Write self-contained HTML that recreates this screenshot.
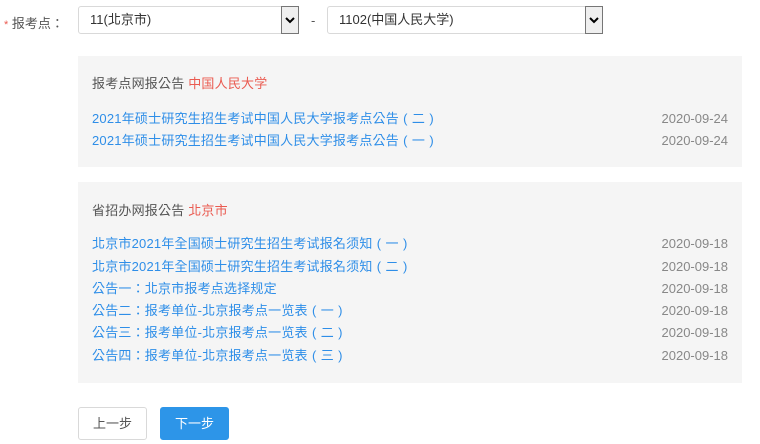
<!DOCTYPE html>
<html><head><meta charset="utf-8"><style>
body{margin:0;width:760px;height:444px;background:#fff;font-family:"Liberation Sans","Noto Sans CJK TC",sans-serif;font-size:13px;color:#555;position:relative;overflow:hidden}
.a{position:absolute;white-space:nowrap}
.sel{position:absolute;top:6px;height:28px;border:1px solid #d9d9d9;border-radius:3px;box-sizing:border-box;background:#fff;color:#333;line-height:26px;padding-left:11px;font-size:13px}
.arr{position:absolute;right:-1px;top:-1px;width:18px;height:28px;border:1px solid #767676;background:#efefef;box-sizing:border-box}
.panel{position:absolute;left:78px;width:664px;background:#f5f5f5;letter-spacing:0.2px}
.t{position:absolute;left:14px;color:#555}
.r{color:#ea5a50}
.li{position:absolute;left:14px;right:14px;height:22px;line-height:22px}
.li span{color:#2e8ee8}
.li b{float:right;font-weight:normal;color:#888;letter-spacing:0}
.p{display:inline-block;width:13px;text-align:center}
.btn{position:absolute;top:407px;width:69px;height:33px;border-radius:3px;box-sizing:border-box;text-align:center;line-height:31px;font-size:13px}
</style></head><body>
<div class="a" style="left:4px;top:13px;"><span style="color:#ea5a50;font-size:11px">*</span> 报考点：</div>
<div class="sel" style="left:78px;width:221px">11(北京市)<div class="arr"><svg width="16" height="26" viewBox="0 0 16 26"><path d="M4 11l4 4 4-4" stroke="#000" stroke-width="2" fill="none"/></svg></div></div>
<div class="a" style="left:311px;top:13px;color:#555">-</div>
<div class="sel" style="left:327px;width:276px">1102(中国人民大学)<div class="arr"><svg width="16" height="26" viewBox="0 0 16 26"><path d="M4 11l4 4 4-4" stroke="#000" stroke-width="2" fill="none"/></svg></div></div>

<div class="panel" style="top:56px;height:111px">
<div class="t" style="top:17px">报考点网报公告 <span class="r">中国人民大学</span></div>
<div class="li" style="top:52px"><span>2021年硕士研究生招生考试中国人民大学报考点公告<i class="p" style="font-style:normal">(</i>二<i class="p" style="font-style:normal">)</i></span><b>2020-09-24</b></div>
<div class="li" style="top:74px"><span>2021年硕士研究生招生考试中国人民大学报考点公告<i class="p" style="font-style:normal">(</i>一<i class="p" style="font-style:normal">)</i></span><b>2020-09-24</b></div>
</div>

<div class="panel" style="top:182px;height:201px">
<div class="t" style="top:18px">省招办网报公告 <span class="r">北京市</span></div>
<div class="li" style="top:51px"><span>北京市2021年全国硕士研究生招生考试报名须知<i class="p" style="font-style:normal">(</i>一<i class="p" style="font-style:normal">)</i></span><b>2020-09-18</b></div>
<div class="li" style="top:74px"><span>北京市2021年全国硕士研究生招生考试报名须知<i class="p" style="font-style:normal">(</i>二<i class="p" style="font-style:normal">)</i></span><b>2020-09-18</b></div>
<div class="li" style="top:96px"><span>公告一：北京市报考点选择规定</span><b>2020-09-18</b></div>
<div class="li" style="top:118px"><span>公告二：报考单位-北京报考点一览表<i class="p" style="font-style:normal">(</i>一<i class="p" style="font-style:normal">)</i></span><b>2020-09-18</b></div>
<div class="li" style="top:140px"><span>公告三：报考单位-北京报考点一览表<i class="p" style="font-style:normal">(</i>二<i class="p" style="font-style:normal">)</i></span><b>2020-09-18</b></div>
<div class="li" style="top:163px"><span>公告四：报考单位-北京报考点一览表<i class="p" style="font-style:normal">(</i>三<i class="p" style="font-style:normal">)</i></span><b>2020-09-18</b></div>
</div>

<div class="btn" style="left:78px;border:1px solid #d9d9d9;color:#555;background:#fff">上一步</div>
<div class="btn" style="left:160px;background:#2d95e8;color:#fff;border:1px solid #2d95e8">下一步</div>
</body></html>
